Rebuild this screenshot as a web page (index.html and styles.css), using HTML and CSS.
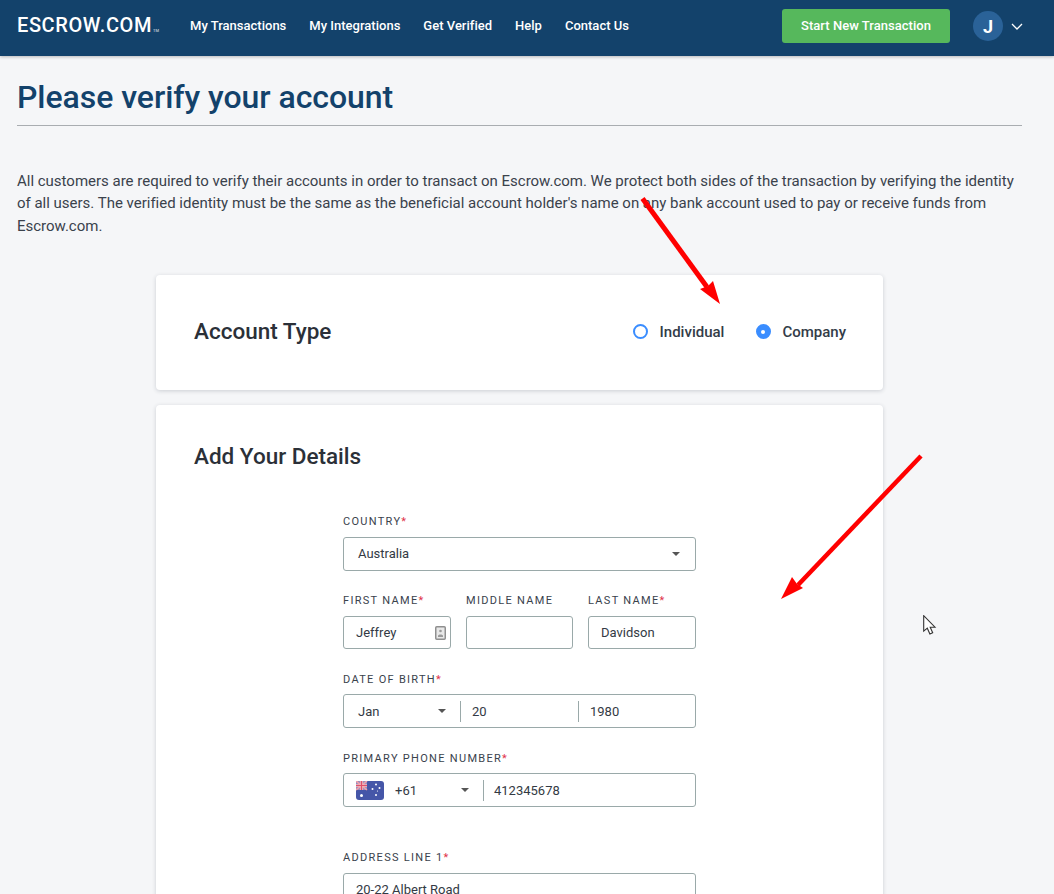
FILE: index.html
```html
<!DOCTYPE html>
<html lang="en">
<head>
<meta charset="utf-8">
<title>Please verify your account</title>
<link rel="stylesheet" href="styles.css">
</head>
<body>
<header class="topbar">
  <div class="logo">ESCROW.COM<span class="tm">TM</span></div>
  <nav class="nav">
    <a>My Transactions</a>
    <a>My Integrations</a>
    <a>Get Verified</a>
    <a>Help</a>
    <a>Contact Us</a>
  </nav>
  <button class="cta">Start New Transaction</button>
  <div class="avatar">J</div>
  <svg class="chev" width="12" height="7" viewBox="0 0 12 7"><path d="M1 1l5 5 5-5" fill="none" stroke="#fff" stroke-width="1.3"/></svg>
</header>
<main class="page">
  <h1 class="title">Please verify your account</h1>
  <p class="intro">All customers are required to verify their accounts in order to transact on Escrow.com. We protect both sides of the transaction by verifying the identity of all users. The verified identity must be the same as the beneficial account holder's name on any bank account used to pay or receive funds from Escrow.com.</p>
  <section class="card type-card">
    <h2 class="card-title">Account Type</h2>
    <div class="radios">
      <label class="radio"><span class="dot"></span>Individual</label>
      <label class="radio"><span class="dot on"></span>Company</label>
    </div>
  </section>
  <section class="card details-card">
    <h2 class="card-title">Add Your Details</h2>
    <form class="form">
      <div class="field">
        <div class="label">COUNTRY<i>*</i></div>
        <div class="box select"><span>Australia</span><b class="caret"></b></div>
      </div>
      <div class="row-3">
        <div class="field">
          <div class="label">FIRST NAME<i>*</i></div>
          <div class="box text short"><span>Jeffrey</span>
            <svg class="contact" width="11" height="14" viewBox="0 0 11 14"><rect x=".75" y=".75" width="9.5" height="12.5" rx="1" fill="#e8e8e8" stroke="#8f8f8f" stroke-width="1.500"/><circle cx="5.500" cy="5" r="1.300" fill="#999"/><path d="M3 10c0-2 5-2 5 0v1H3z" fill="#999"/></svg>
          </div>
        </div>
        <div class="field">
          <div class="label">MIDDLE NAME</div>
          <div class="box text short"></div>
        </div>
        <div class="field">
          <div class="label">LAST NAME<i>*</i></div>
          <div class="box text short"><span>Davidson</span></div>
        </div>
      </div>
      <div class="field tight">
        <div class="label">DATE OF BIRTH<i>*</i></div>
        <div class="box group">
          <div class="seg month"><span>Jan</span><b class="caret"></b></div>
          <div class="seg day">20</div>
          <div class="seg year">1980</div>
        </div>
      </div>
      <div class="field tight">
        <div class="label">PRIMARY PHONE NUMBER<i>*</i></div>
        <div class="box group">
          <div class="seg code">
            <svg class="flag" width="28" height="19" viewBox="0 0 28 19"><rect width="28" height="19" rx="3" fill="#4556a8"/><path d="M3 0h8v9H0V3a3 3 0 0 1 3-3z" fill="#9a8fc0"/><path d="M0 0l11 9M11 0L0 9" stroke="#f2a0a8" stroke-width="1.600"/><path d="M5.500 0v9M0 4.500h11" stroke="#f6b8ba" stroke-width="2.600"/><path d="M5.500 0v9M0 4.500h11" stroke="#e0506a" stroke-width="1.200"/><g fill="#fff"><circle cx="5.500" cy="14.500" r="1.500"/><circle cx="20" cy="3.500" r="1"/><circle cx="20" cy="14" r="1"/><circle cx="16.500" cy="8" r="1"/><circle cx="23.500" cy="7" r="1"/><circle cx="21.500" cy="10" r=".6"/></g></svg>
            <span>+61</span><b class="caret"></b>
          </div>
          <div class="seg phone">412345678</div>
        </div>
      </div>
      <div class="field address">
        <div class="label">ADDRESS LINE 1<i>*</i></div>
        <div class="box text"><span>20-22 Albert Road</span></div>
      </div>
    </form>
  </section>
</main>
<svg class="overlay arrow-a" width="90" height="120" viewBox="0 0 90 120"><path d="M2.500 8.500L67 97" stroke="#f00" stroke-width="5" fill="none"/><path d="M80 114L60 99 68 96 73 91z" fill="#f00"/></svg>
<svg class="overlay arrow-b" width="150" height="155" viewBox="0 0 150 155"><path d="M141 3L18 132" stroke="#f00" stroke-width="4.500" fill="none"/><path d="M1 146L12 124 17 131 23 135z" fill="#f00"/></svg>
<svg class="overlay cursor" width="14" height="21" viewBox="0 0 14 21"><path d="M.7 .7v15.500l3.600-3 2.600 5.800 2.800-1.200-2.500-5.600h4.800z" fill="#fff" stroke="#333" stroke-width="1.100"/></svg>
</body>
</html>
```

FILE: styles.css
```css
* { box-sizing: border-box; }
html, body { margin: 0; padding: 0; }
body {
  width: 1054px;
  height: 894px;
  overflow: hidden;
  position: relative;
  background: #f5f6f8;
  font-family: Roboto, "Liberation Sans", sans-serif;
  color: #2b3440;
}
.topbar {
  height: 56px;
  background: #13426b;
  display: flex;
  align-items: center;
  padding: 0 0 4px 17px;
  color: #fff;
  box-shadow: 0 1px 3px rgba(0,0,0,.25);
}
.logo {
  width: 173px;
  padding-bottom: 3px;
  font-family: Roboto, sans-serif;
  font-size: 20px;
  font-weight: 500;
  letter-spacing: .6px;
  white-space: nowrap;
}
.tm { font-size: 4px; letter-spacing: 0; margin-left: 1px; opacity: .7; }
.nav { display: flex; gap: 23px; padding-bottom: 2px; font-size: 13px; font-weight: 500; letter-spacing: .01px; width: 592px; }
.cta {
  width: 168px;
  height: 34px;
  background: #56b85c;
  border: 0;
  border-radius: 3px;
  color: #fff;
  font: 500 13px Roboto, sans-serif;
  letter-spacing: .03px;
  padding: 0 0 2px;
}
.avatar {
  width: 30px;
  height: 30px;
  margin-left: 23px;
  border-radius: 50%;
  background: #2a6298;
  font-size: 18px;
  font-weight: 700;
  display: flex;
  align-items: center;
  justify-content: center;
}
.chev { margin-left: 8px; }
.page { padding: 0 32px 0 17px; }
.title {
  margin: 0;
  padding: 22px 0 9px;
  height: 70px;
  border-bottom: 1px solid #a9adb1;
  font-size: 32px;
  line-height: 39px;
  font-weight: 500;
  letter-spacing: -.05px;
  color: #13426b;
}
.intro {
  margin: 43.700px 0 38px;
  width: 1005px;
  font-size: 15px;
  line-height: 22.500px;
  letter-spacing: -.008px;
  color: #3a424c;
}
.card {
  width: 727px;
  margin-left: 139px;
  background: #fff;
  border-radius: 4px;
  box-shadow: 0 1px 4px rgba(40,50,70,.2);
}
.type-card {
  height: 115px;
  margin-bottom: 15px;
  padding: 0 37px 2px 38px;
  display: flex;
  align-items: center;
  justify-content: space-between;
}
.card-title { margin: 0 0 2px; font-size: 22.500px; font-weight: 500; line-height: 26px; color: #2b3038; }
.radios { display: flex; gap: 31.500px; }
.radio { display: flex; align-items: center; gap: 11.500px; font-size: 15px; font-weight: 500; color: #333c48; }
.dot { width: 15px; height: 15px; border: 2px solid #3a8dff; border-radius: 50%; background: #fff; }
.dot.on { background: #3a8dff; position: relative; }
.dot.on::after {
  content: "";
  position: absolute;
  left: 3.500px;
  top: 3.500px;
  width: 4px;
  height: 4px;
  border-radius: 50%;
  background: #fff;
}
.details-card { height: 600px; padding: 38px 38px 0; }
.form { width: 353px; margin: 46px 0 0 149px; }
.field { margin-bottom: 23px; }
.label {
  font-size: 11px;
  line-height: 14px;
  letter-spacing: 1.300px;
  color: #3a424c;
  margin-bottom: 8px;
  white-space: nowrap;
}
.label i { color: #e0324a; font-style: normal; letter-spacing: 0; }
.tight { padding-top: 1px; }
.tight .label { margin-bottom: 7px; }
.box {
  height: 34px;
  background: #fff;
  border: 1px solid #9aa9a9;
  border-radius: 3px;
  font-size: 13px;
  color: #333a44;
  display: flex;
  align-items: center;
}
.select { padding: 0 15px 1px 14px; justify-content: space-between; }
.text { padding: 0 12px; justify-content: space-between; }
.short { height: 33px; }
.caret {
  display: block;
  width: 0;
  height: 0;
  border: 4.500px solid transparent;
  border-top-color: #555;
  border-bottom: 0;
}
.row-3 { display: grid; grid-template-columns: 108px 107px 108px; column-gap: 15px; }
.contact { margin-right: -8px; }
.seg { height: 21px; display: flex; align-items: center; }
.month { width: 117px; padding: 0 14px 0 14px; justify-content: space-between; border-right: 1px solid #9aa9a9; }
.day { width: 118px; padding-left: 11px; border-right: 1px solid #9aa9a9; }
.year { padding-left: 11px; }
.code { width: 140px; padding: 0 14px 0 12px; border-right: 1px solid #9aa9a9; }
.code span { margin-left: 11px; flex: 1; }
.phone { padding-left: 10px; }
.address { margin-top: 44px; }
.address .box { padding-bottom: 1px; }
.overlay { position: absolute; }
.arrow-a { left: 640px; top: 190px; }
.arrow-b { left: 780px; top: 453px; }
.cursor { left: 923px; top: 615px; }
```
